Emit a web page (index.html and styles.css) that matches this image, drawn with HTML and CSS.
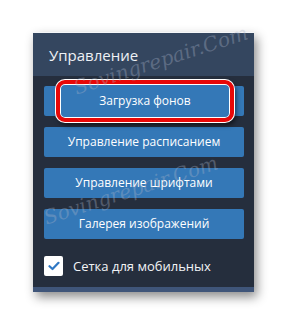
FILE: index.html
```html
<!DOCTYPE html>
<html lang="ru">
<head>
    <meta charset="UTF-8">
    <title>Управление</title>
    <link rel="stylesheet" href="styles.css">
</head>
<body>

    <div class="panel">
        <div class="panel-header">Управление</div>
        <div class="panel-body">
            <div class="btn btn-marked">
                Загрузка фонов
                <!-- annotation frame over the first button -->
                <div class="mark">Загрузка фонов</div>
            </div>
            <div class="btn">Управление расписанием</div>
            <div class="btn">Управление шрифтами</div>
            <div class="btn">Галерея изображений</div>
            <label class="check">
                <span class="check-box">
                    <svg width="12" height="10" viewBox="0 0 12 10">
                        <path d="M1.5 5.2 L4.5 8 L10.5 1.8" fill="none" stroke="#2f78c4" stroke-width="2.2" stroke-linecap="round" stroke-linejoin="round"/>
                    </svg>
                </span>
                Сетка для мобильных
            </label>
        </div>
        <div class="panel-footer"></div>
    </div>

    <div class="watermark wm-1">Sovingrepair.Com</div>
    <div class="watermark wm-2">Sovingrepair.Com</div>

</body>
</html>
```

FILE: styles.css
```css
/* Basic styling */
body {
    font-family: "Open Sans", "Noto Sans", sans-serif;
    margin: 0;
    padding: 32px 0 0 33px;
    background-color: #ffffff;
    position: relative;
    height: 324px;
    box-sizing: border-box;
    overflow: hidden;
}
.panel {
    width: 221px;
    background-color: #252e3d;
    border-top: 1px solid #f4f6f8;
    box-shadow: 3px 5px 10px rgba(0, 0, 0, 0.45);
}
.panel-header {
    height: 43px;
    background-color: #34465f;
    color: #eef1f5;
    font-size: 15px;
    line-height: 45px;
    padding-left: 16px;
}
.panel-body {
    padding: 10px 10px 11px 11px;
    display: flex;
    flex-direction: column;
    gap: 11px;
}
.btn {
    height: 30px;
    line-height: 30px;
    background-color: #3478b7;
    color: #ffffff;
    font-size: 12px;
    text-align: center;
    border-radius: 2px;
}
.btn-marked {
    position: relative;
}
.mark {
    position: absolute;
    left: 12px;
    right: 10px;
    top: -6px;
    bottom: -6px;
    background-color: #3478b7;
    border: 4px solid #e80808;
    border-radius: 9px;
    box-shadow: 0 0 0 1px #ffffff, inset 0 0 0 1px #ffffff, 2px 3px 5px rgba(0, 0, 0, 0.6);
    line-height: 34px;
}
.check {
    margin-top: 6px;
    display: flex;
    align-items: center;
    gap: 10px;
    color: #f2f4f7;
    font-size: 13px;
}
.check-box {
    width: 19px;
    height: 20px;
    background-color: #ffffff;
    border-radius: 2px;
    display: flex;
    align-items: center;
    justify-content: center;
}
.panel-footer {
    height: 5px;
    background-color: #3f5579;
}
.watermark {
    position: absolute;
    font-family: "DejaVu Serif", serif;
    font-style: italic;
    font-size: 20px;
    color: rgba(170, 180, 200, 0.35);
    transform: rotate(-18deg);
    white-space: nowrap;
    pointer-events: none;
}
.wm-1 {
    left: 70px;
    top: 48px;
}
.wm-2 {
    left: 40px;
    top: 178px;
}
```
